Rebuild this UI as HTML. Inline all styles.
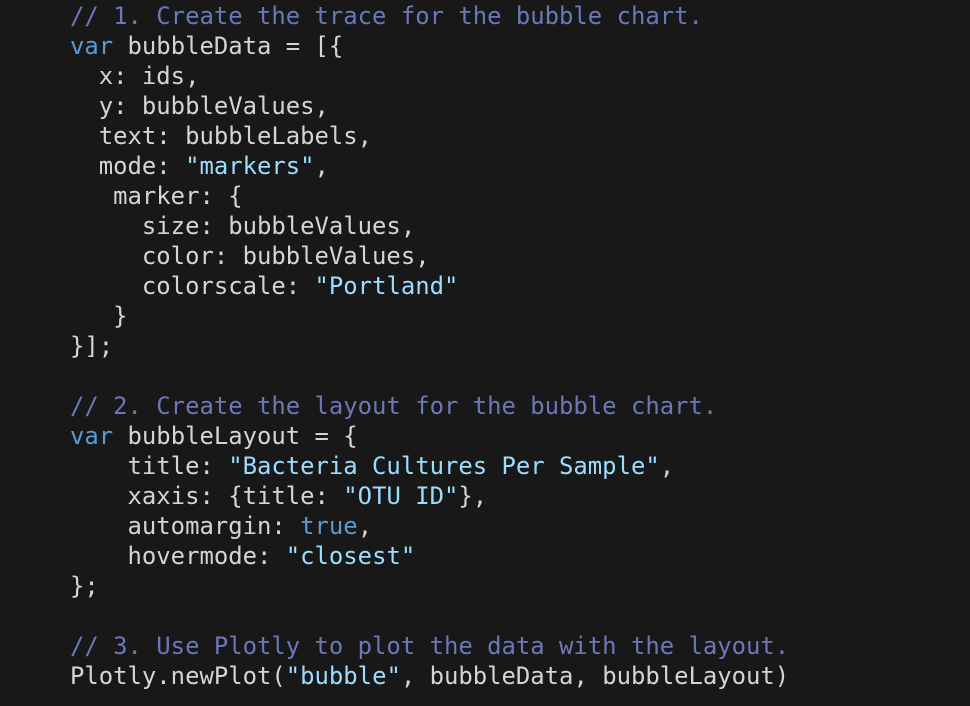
<!DOCTYPE html>
<html><head><style>
html,body{margin:0;padding:0;background:#181818;width:970px;height:706px;overflow:hidden}
pre{margin:0;position:absolute;left:70px;top:1px;font-family:"DejaVu Sans Mono","Liberation Mono",monospace;font-size:23.9px;line-height:30px;color:#d4d4d4}
.c{color:#6b78b8}.k{color:#569cd6}.s{color:#9cdcfe}
</style></head><body><pre><span class="c">// 1. Create the trace for the bubble chart.</span>
<span class="k">var</span> bubbleData = [{
  x: ids,
  y: bubbleValues,
  text: bubbleLabels,
  mode: <span class="s">"markers"</span>,
   marker: {
     size: bubbleValues,
     color: bubbleValues,
     colorscale: <span class="s">"Portland"</span>
   }
}];

<span class="c">// 2. Create the layout for the bubble chart.</span>
<span class="k">var</span> bubbleLayout = {
    title: <span class="s">"Bacteria Cultures Per Sample"</span>,
    xaxis: {title: <span class="s">"OTU ID"</span>},
    automargin: <span class="k">true</span>,
    hovermode: <span class="s">"closest"</span>
};

<span class="c">// 3. Use Plotly to plot the data with the layout.</span>
Plotly.newPlot(<span class="s">"bubble"</span>, bubbleData, bubbleLayout)</pre></body></html>
